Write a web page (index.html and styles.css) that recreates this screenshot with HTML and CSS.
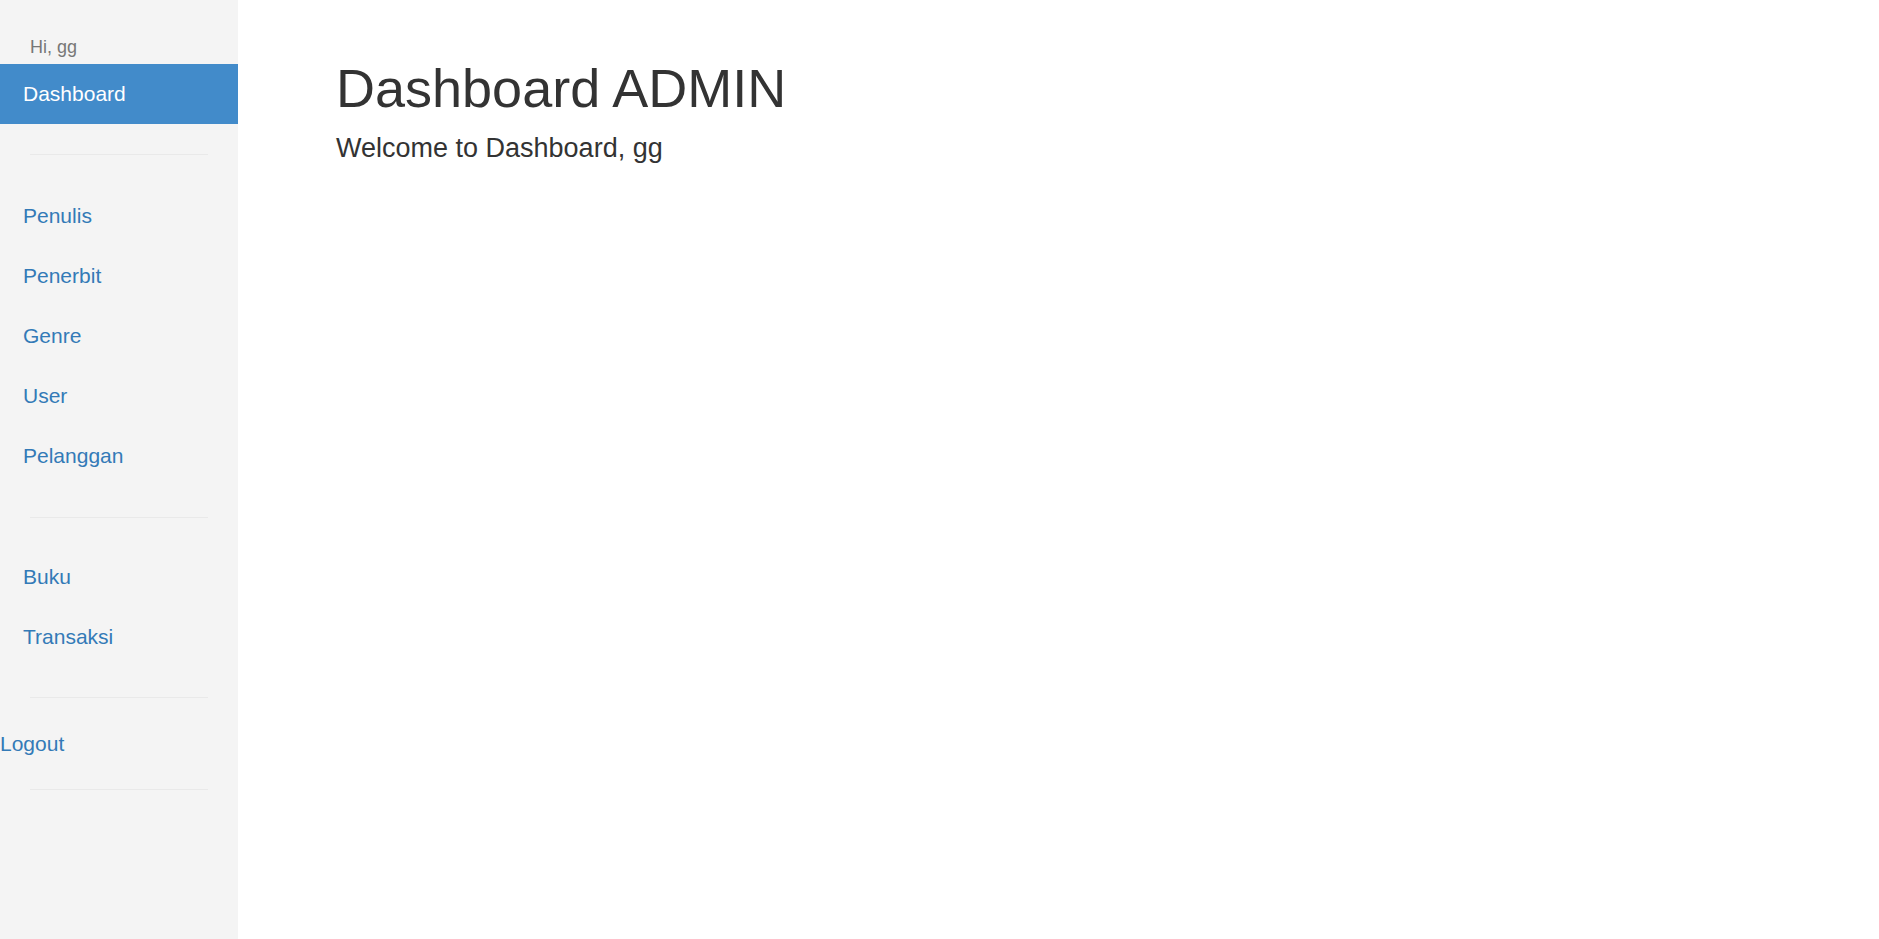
FILE: index.html
```html
<!DOCTYPE html>
<html lang="id">
<head>
<meta charset="utf-8">
<title>Dashboard ADMIN</title>
<link rel="stylesheet" href="styles.css">
</head>
<body>
<div class="layout">
  <aside class="sidebar">
    <div class="greeting">Hi, gg</div>
    <nav class="nav nav-top">
      <a class="nav-link active" href="#">Dashboard</a>
    </nav>
    <div class="divider d1"></div>
    <nav class="nav nav-master">
      <a class="nav-link" href="#">Penulis</a>
      <a class="nav-link" href="#">Penerbit</a>
      <a class="nav-link" href="#">Genre</a>
      <a class="nav-link" href="#">User</a>
      <a class="nav-link" href="#">Pelanggan</a>
    </nav>
    <div class="divider d2"></div>
    <nav class="nav nav-data">
      <a class="nav-link" href="#">Buku</a>
      <a class="nav-link" href="#">Transaksi</a>
    </nav>
    <div class="divider d3"></div>
    <a class="logout" href="#">Logout</a>
    <div class="divider d4"></div>
  </aside>
  <main class="main">
    <h1 class="title">Dashboard ADMIN</h1>
    <h3 class="subtitle">Welcome to Dashboard, gg</h3>
  </main>
</div>
</body>
</html>
```

FILE: styles.css
```css
html, body {
  margin: 0;
  padding: 0;
  height: 100%;
  background: #ffffff;
  font-family: "Liberation Sans", Arial, Helvetica, sans-serif;
  color: #333333;
}

.layout {
  display: flex;
  min-height: 100vh;
}

.sidebar {
  width: 238px;
  flex: 0 0 238px;
  background: #f4f4f4;
  padding-top: 35px;
  display: flex;
  flex-direction: column;
  box-sizing: border-box;
}

.greeting {
  font-size: 18px;
  line-height: 24px;
  color: #777777;
  padding-left: 30px;
  margin-bottom: 5px;
}

.nav {
  display: flex;
  flex-direction: column;
}

.nav-link {
  display: block;
  height: 60px;
  line-height: 60px;
  font-size: 21px;
  padding-left: 23px;
  color: #337ab7;
  text-decoration: none;
}

.nav-link.active {
  background: #428bca;
  color: #ffffff;
}

.divider {
  height: 1px;
  background: #e9e9e9;
  margin: 0 30px;
}

.d1 { margin-top: 30px; }
.nav-master { margin-top: 31px; }
.d2 { margin-top: 31px; }
.nav-data { margin-top: 29px; }
.d3 { margin-top: 30px; }

.logout {
  display: block;
  margin-top: 16px;
  height: 60px;
  line-height: 60px;
  font-size: 21px;
  color: #337ab7;
  text-decoration: none;
}

.d4 { margin-top: 15px; }

.main {
  flex: 1;
  padding: 58px 0 0 98px;
}

.title {
  margin: 0;
  font-size: 54px;
  line-height: 60px;
  font-weight: 400;
  color: #333333;
}

.subtitle {
  margin: 15px 0 0;
  font-size: 27px;
  line-height: 30px;
  font-weight: 400;
  color: #333333;
}
```
